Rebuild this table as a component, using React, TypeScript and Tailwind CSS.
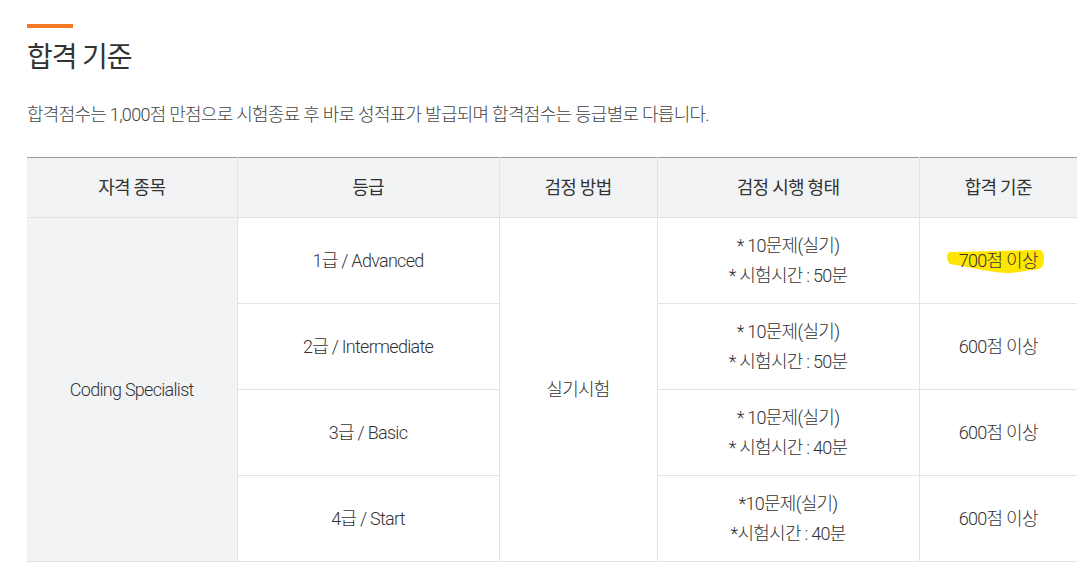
const FONT = "font-['Roboto','Noto_Sans_CJK_KR',sans-serif]"

const rows = [
  { grade: '1급 / Advanced', form: ['* 10문제(실기)', '* 시험시간 : 50분'], pass: '700점 이상', mark: true },
  { grade: '2급 / Intermediate', form: ['* 10문제(실기)', '* 시험시간 : 50분'], pass: '600점 이상' },
  { grade: '3급 / Basic', form: ['* 10문제(실기)', '* 시험시간 : 40분'], pass: '600점 이상' },
  { grade: '4급 / Start', form: ['*10문제(실기)', '*시험시간 : 40분'], pass: '600점 이상' },
]

function Highlight({ children }: { children: React.ReactNode }) {
  return (
    <span className="relative inline-block leading-[24px]">
      <svg
        className="absolute left-[-12px] top-[1px] h-[23px] w-[97px]"
        viewBox="0 0 97 23"
        preserveAspectRatio="none"
        aria-hidden
      >
        <path
          d="M3 2 L93 0 C96 1 97 4 97 8 C97 13 96 18 92 19 C82 20 72 23 58 23 C42 22 22 17 3 14 C1 12 0 9 0 6 C0 4 1 3 3 2 Z"
          fill="#ffe600"
        />
      </svg>
      <span className="relative">{children}</span>
    </span>
  )
}

export default function App() {
  return (
    <div className={`min-h-screen bg-white pl-[27px] pt-[24px] text-[#333] ${FONT}`}>
      <div className="h-[4px] w-[46px] bg-[#f47920]" />
      <h2 className="mt-[10px] text-[28px] leading-[40px] font-normal tracking-[-0.04em] text-[#333]">
        합격 기준
      </h2>
      <p className="mt-[24px] text-[18px] leading-[26px] font-light tracking-[-0.04em] text-[#444]">
        합격점수는 1,000점 만점으로 시험종료 후 바로 성적표가 발급되며 합격점수는 등급별로 다릅니다.
      </p>

      <table className="mt-[29px] w-[1050px] table-fixed border-collapse border-t border-t-[#9a9a9a] text-center text-[18px] font-light tracking-[-0.04em] text-[#333]">
        <colgroup>
          <col className="w-[210px]" />
          <col className="w-[262px]" />
          <col className="w-[158px]" />
          <col className="w-[262px]" />
          <col className="w-[158px]" />
        </colgroup>
        <thead>
          <tr className="h-[60px] bg-[#f2f3f5]">
            {['자격 종목', '등급', '검정 방법', '검정 시행 형태', '합격 기준'].map((h, i) => (
              <th
                key={h}
                className={`border-b border-[#e3e3e3] font-normal ${i > 0 ? 'border-l' : ''}`}
              >
                {h}
              </th>
            ))}
          </tr>
        </thead>
        <tbody>
          {rows.map((r, i) => (
            <tr key={r.grade} className="h-[86px]">
              {i === 0 && (
                <td rowSpan={4} className="border-b border-[#e3e3e3] bg-[#f2f3f5]">
                  Coding Specialist
                </td>
              )}
              <td className="border-b border-l border-[#e3e3e3]">{r.grade}</td>
              {i === 0 && (
                <td rowSpan={4} className="border-b border-l border-[#e3e3e3]">
                  실기시험
                </td>
              )}
              <td className="border-b border-l border-[#e3e3e3] leading-[30px]">
                {r.form.map((l) => (
                  <div key={l}>{l}</div>
                ))}
              </td>
              <td className="border-b border-l border-[#e3e3e3]">
                {r.mark ? <Highlight>{r.pass}</Highlight> : r.pass}
              </td>
            </tr>
          ))}
        </tbody>
      </table>
    </div>
  )
}
